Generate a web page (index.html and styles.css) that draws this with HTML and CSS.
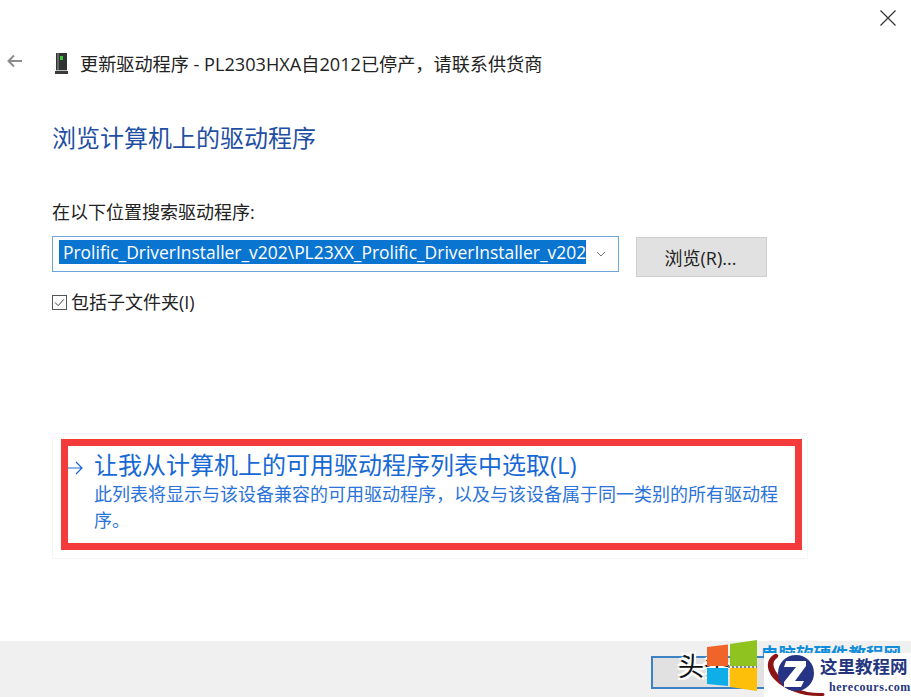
FILE: index.html
```html
<!DOCTYPE html>
<html lang="zh-CN">
<head>
<meta charset="utf-8">
<title>更新驱动程序</title>
<link rel="stylesheet" href="styles.css">
</head>
<body>
<div class="dialog">
  <div class="main">
    <div class="close-row">
      <svg class="close" width="16" height="16" viewBox="0 0 16 16"><path d="M.5.5l15 15M15.5.5l-15 15" stroke="#333" stroke-width="1.2" fill="none"/></svg>
    </div>
    <div class="title-row">
      <svg class="back" width="16" height="14" viewBox="0 0 16 14"><path d="M15 7H2M7 1.5L1.500 7 7 12.500" stroke="#8c8c8c" stroke-width="2" fill="none"/></svg>
      <svg class="device" width="15" height="23" viewBox="0 0 15 23"><path d="M2 1h11v17H2z" fill="#2f3331"/><path d="M3 1h2v17H3z" fill="#666"/><rect x="6" y="4" width="3" height="4" fill="#3ec43e"/><path d="M1 19h13v3H1z" fill="#3a3a3a"/><path d="M2 18h11v1H2z" fill="#bbb"/></svg>
      <span class="title">更新驱动程序 - PL2303HXA自2012已停产，请联系供货商</span>
    </div>
    <h1 class="heading">浏览计算机上的驱动程序</h1>
    <label class="label">在以下位置搜索驱动程序:</label>
    <div class="path-row">
      <div class="combo">
        <span class="selected">Prolific_DriverInstaller_v202\PL23XX_Prolific_DriverInstaller_v202</span>
        <svg class="chev" width="10" height="6" viewBox="0 0 10 6"><path d="M1 1l4 4 4-4" stroke="#777" stroke-width="1" fill="none"/></svg>
      </div>
      <div class="browse">浏览(R)...</div>
    </div>
    <div class="check-row">
      <svg class="check" width="15" height="15" viewBox="0 0 15 15"><rect x=".5" y=".5" width="14" height="14" fill="#fff" stroke="#555"/><path d="M3 7.5l3.2 3.2 5.600-6.400" stroke="#444" stroke-width="1" fill="none"/></svg>
      <span>包括子文件夹(I)</span>
    </div>
    <div class="option-outer">
      <div class="option">
        <div class="option-arrow"><svg width="15" height="14" viewBox="0 0 15 14"><path d="M0 7h14M8 1l6 6-6 6" stroke="#1668d4" stroke-width="1.2" fill="none"/></svg></div>
        <div class="option-body">
          <div class="option-title">让我从计算机上的可用驱动程序列表中选取(L)</div>
          <div class="option-desc">此列表将显示与该设备兼容的可用驱动程序，以及与该设备属于同一类别的所有驱动程序。</div>
        </div>
      </div>
    </div>
  </div>
  <div class="footer">
    <div class="next-btn"><span class="wm-text">头条</span></div>
    <span class="wm-blue">电脑软硬件教程网</span>
    <svg class="win" width="52" height="52" viewBox="0 0 52 52"><path d="M0 7l21-2.500V26H0z" fill="#f0642a"/><path d="M23 4L50 0v26H23z" fill="#8fc31f"/><path d="M0 28h21v18L0 44z" fill="#10aee8"/><path d="M23 28h27v23l-27-4z" fill="#fdbf0a"/><path d="M21 27h29" stroke="#222" stroke-width="1" stroke-dasharray="2 2"/></svg>
    <div class="wm-card">
      <svg class="wm-logo" width="62" height="44" viewBox="0 0 62 44"><path d="M10 1C0 6 1 18 10 27c10 10 28 17 48 16 2 0 2-3 0-3-18 1-34-6-43-16C8 16 6 9 12 5c3-2 0-5-2-4z" fill="#8d1414"/><circle cx="31" cy="20" r="18" fill="#263486"/><path d="M21 8h20v5L30 28h9l-3 6H19v-5L31 14h-12z" fill="#fff"/></svg>
      <div class="wm-names">
        <div class="wm-cn">这里教程网</div>
        <div class="wm-en">herecours.com</div>
      </div>
    </div>
  </div>
</div>
</body>
</html>
```
FILE: styles.css
```css
* { box-sizing: border-box; }
html, body { margin: 0; padding: 0; }
body {
  width: 911px;
  height: 697px;
  overflow: hidden;
  background: #fff;
  font-family: "Open Sans", "Noto Sans CJK SC", sans-serif;
  color: #222;
}
.dialog { display: flex; flex-direction: column; height: 697px; }
.main { flex: 1; min-height: 0; padding: 10px 0 0 0; }
.close-row { display: flex; justify-content: flex-end; padding-right: 15px; height: 16px; }
.title-row { display: flex; align-items: center; height: 30px; margin-top: 22px; padding-left: 7px; }
.back { margin-right: 31px; margin-top: -5px; }
.device { margin-right: 11px; }
.title { font-size: 18.15px; color: #222; white-space: nowrap; }
.heading { margin: 43px 0 0 52px; font-size: 24px; font-weight: 400; line-height: 34px; color: #1f4fa3; }
.label { display: block; margin: 45px 0 0 52px; font-size: 18px; line-height: 24px; }
.path-row { display: flex; margin: 12px 0 0 52px; }
.combo {
  width: 567px; height: 36px; border: 1px solid #6aa6dc;
  display: flex; align-items: center; justify-content: space-between;
  padding: 0 12px 0 6px;
}
.selected {
  background: #0a74d1; color: #fff; padding-left: 4px; margin-top: -4px;
  font-family: "Open Sans", "Noto Sans", sans-serif; font-size: 17.46px; line-height: 24px; white-space: nowrap;
}
.browse {
  width: 131px; height: 40px; margin: 1px 0 0 17px;
  background: #e1e1e1; border: 1px solid #cfcfcf;
  display: flex; align-items: center; justify-content: center;
  font-size: 18px; padding-right: 2px;
}
.check-row { display: flex; align-items: center; gap: 4px; margin: 10px 0 0 52px; font-size: 18px; line-height: 30px; }
.option-outer { margin: 116px 0 0 52px; width: 756px; height: 126px; border: 1px solid #f3f7fb; padding: 5px 0 0 8px; }
.option { display: flex; width: 741px; height: 111px; border: 7px solid #f53a3c; color: #1668d4; }
.option-arrow { width: 26px; padding-top: 12px; flex: none; }
.option-body { flex: 1; }
.option-title { font-size: 24px; line-height: 32px; margin-top: 3px; white-space: nowrap; }
.option-desc { font-size: 18px; line-height: 26px; color: #2a73d8; width: 688px; }
.footer { position: relative; height: 56px; background: #f0f0f0; flex: none; }
.next-btn { position: absolute; left: 651px; top: 15px; width: 115px; height: 33px; border: 2px solid #3c82c4; background: #e1e1e1; }
.wm-text { position: absolute; left: 25px; top: -12px; font-size: 26px; line-height: 40px; color: #111; white-space: nowrap; text-shadow: 2px 2px 0 #fff, -2px -2px 0 #fff, 2px -2px 0 #fff, -2px 2px 0 #fff; }
.wm-blue { position: absolute; left: 761px; top: 0; font-size: 17.5px; font-weight: 700; line-height: 24px; color: #0f8ddb; white-space: nowrap; }
.win { position: absolute; left: 707px; top: -1px; }
.wm-card { position: absolute; left: 764px; top: 12px; width: 147px; height: 44px; background: #fff; display: flex; }
.wm-logo { position: absolute; left: 1px; top: 0; }
.wm-names { margin-left: 56px; }
.wm-cn { font-family: "Noto Sans CJK SC", serif; font-weight: 700; font-size: 17.5px; line-height: 26px; color: #25367f; white-space: nowrap; }
.wm-en { font-family: "Liberation Serif", serif; font-weight: 700; font-size: 12px; line-height: 16px; color: #25367f; margin-left: 9px; letter-spacing: .55px; white-space: nowrap; }
```
